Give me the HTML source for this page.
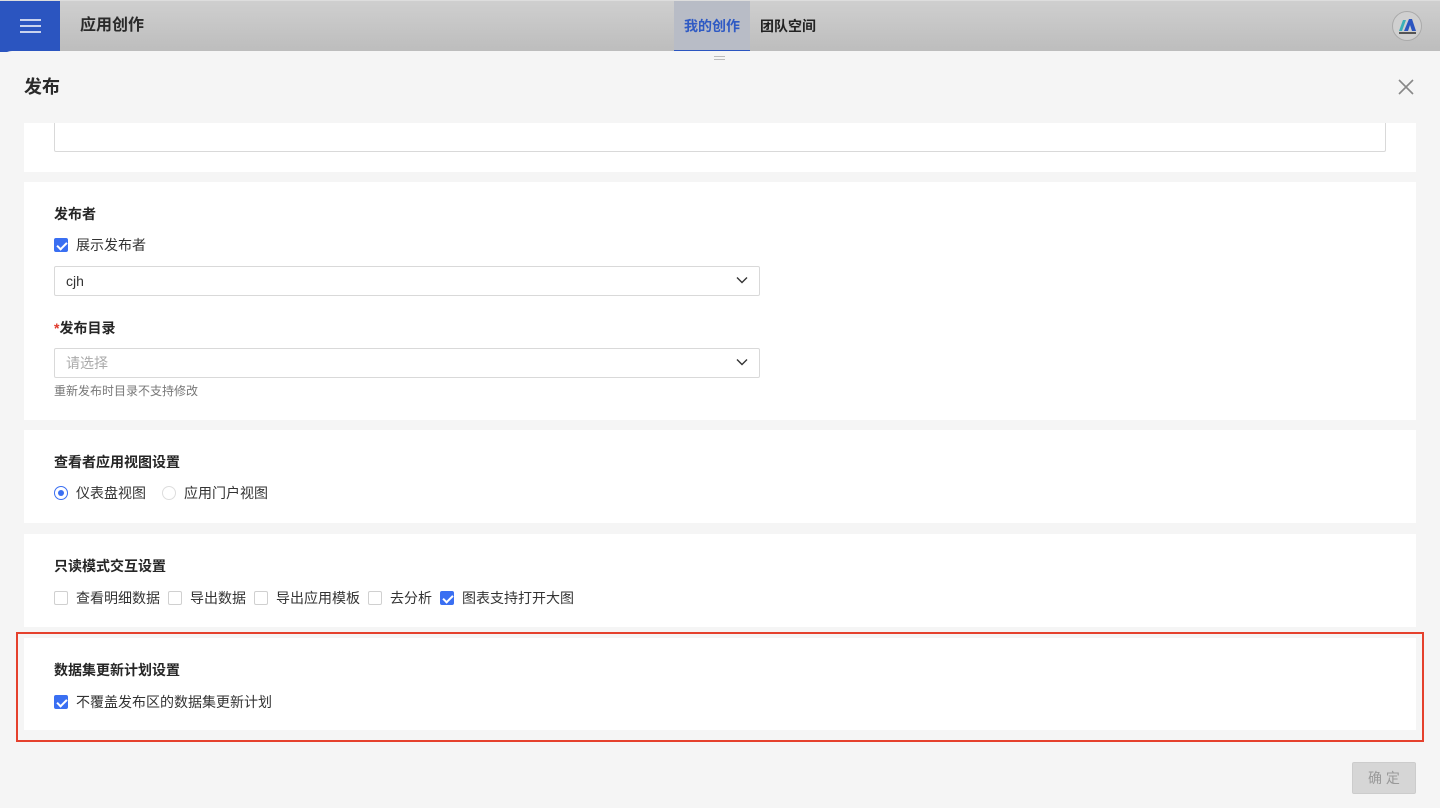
<!DOCTYPE html>
<html><head><meta charset="utf-8"><style>
*{box-sizing:border-box;margin:0;padding:0}
body{width:1440px;height:808px;overflow:hidden;background:#f5f5f5;font-family:"Liberation Sans","Noto Sans CJK SC",sans-serif;color:#333;position:relative}
.top{position:absolute;left:0;top:0;width:1440px;height:51px;background:linear-gradient(#cfcfcf,#bdbdbd);border-top:1px solid #ddd}
.menu{position:absolute;left:0;top:0;width:60px;height:51px;background:#2b55c0}
.menu i{position:absolute;left:20px;width:21px;height:2px;background:#c9d3ee}
.title{position:absolute;left:80px;top:13px;font-size:16px;line-height:24px;color:#2a2a2a;font-weight:600}
.tab{position:absolute;top:0;height:51px;line-height:51px;font-size:14px;font-weight:600;text-align:center}
.modal{position:absolute;left:0;top:51px;width:1440px;height:757px;background:#f5f5f5;border-radius:12px 12px 0 0}
.sec{position:absolute;left:24px;width:1392px;background:#fff}
.h{position:absolute;left:30px;font-size:14px;font-weight:600;color:#262626}
.t{position:absolute;font-size:14px;color:#333}
.cb{position:absolute;width:14px;height:14px;border:1px solid #d0d0d0;border-radius:2px;background:#fff}
.cb.on{background:#3a6ff2;border-color:#3a6ff2}
.cb.on::after{content:"";position:absolute;left:4px;top:1px;width:4px;height:8px;border:solid #fff;border-width:0 2px 2px 0;transform:rotate(45deg)}
.sel{position:absolute;left:30px;width:706px;height:30px;border:1px solid #d9d9d9;border-radius:2px;background:#fff;font-size:14px;line-height:28px;padding-left:11px}
.sel svg{position:absolute;right:11px;top:9px}
</style></head><body>
<div class="top">
<div class="menu"><i style="top:18px"></i><i style="top:24px"></i><i style="top:30px"></i></div>
<div class="title">应用创作</div>
<div class="tab" style="left:674px;width:76px;background:#b8bcc6;color:#2f5ac4;border-bottom:2px solid #2b55c0">我的创作</div>
<div class="tab" style="left:750px;width:76px;color:#222">团队空间</div>
<div style="position:absolute;left:1392px;top:10px;width:30px;height:30px;border-radius:50%;border:1px solid #aaa;background:#d0d0d0">
<svg width="28" height="28" viewBox="0 0 28 28"><polygon points="6,19 10,8 13,8 9,19" fill="#3bb0b8"/><polygon points="11,19 16,7 19,7 23,19 19,19 17,13 15,19" fill="#2b55c0"/><rect x="6" y="20" width="17" height="2" fill="#555"/></svg></div>
</div>
<div class="modal">
<div style="position:absolute;left:714px;top:5px;width:11px;height:1px;background:#bbb"></div>
<div style="position:absolute;left:714px;top:8px;width:11px;height:1px;background:#bbb"></div>
<div style="position:absolute;left:24px;top:23px;font-size:18px;line-height:26px;font-weight:600;color:#2a2a2a">发布</div>
<svg style="position:absolute;left:1397px;top:27px" width="18" height="18" viewBox="0 0 18 18"><path d="M2 2L16 16M16 2L2 16" stroke="#888" stroke-width="1.6"/></svg>

<div class="sec" style="top:72px;height:49px"><div style="position:absolute;left:30px;top:0;width:1332px;height:29px;border:1px solid #d9d9d9;border-top:none;border-radius:0 0 2px 2px"></div></div>

<div class="sec" style="top:131px;height:238px">
<div class="h" style="top:22px">发布者</div>
<div class="cb on" style="left:30px;top:56px"></div><div class="t" style="left:52px;top:53px">展示发布者</div>
<div class="sel" style="top:84px">cjh<svg width="12" height="8" viewBox="0 0 12 8"><path d="M1 1.5L6 6.5L11 1.5" stroke="#333" stroke-width="1.4" fill="none"/></svg></div>
<div class="h" style="top:136px"><span style="color:#e0392b">*</span>发布目录</div>
<div class="sel" style="top:166px;color:#aaa">请选择<svg width="12" height="8" viewBox="0 0 12 8"><path d="M1 1.5L6 6.5L11 1.5" stroke="#333" stroke-width="1.4" fill="none"/></svg></div>
<div style="position:absolute;left:30px;top:200px;font-size:12px;color:#777">重新发布时目录不支持修改</div>
</div>

<div class="sec" style="top:379px;height:93px">
<div class="h" style="top:22px">查看者应用视图设置</div>
<div style="position:absolute;left:30px;top:56px;width:14px;height:14px;border-radius:50%;border:1px solid #3a6ff2"><div style="position:absolute;left:3px;top:3px;width:6px;height:6px;border-radius:50%;background:#3a6ff2"></div></div>
<div class="t" style="left:52px;top:53px">仪表盘视图</div>
<div style="position:absolute;left:138px;top:56px;width:14px;height:14px;border-radius:50%;border:1px solid #ddd"></div>
<div class="t" style="left:160px;top:53px">应用门户视图</div>
</div>

<div class="sec" style="top:483px;height:93px">
<div class="h" style="top:22px">只读模式交互设置</div>
<div class="cb" style="left:30px;top:57px"></div><div class="t" style="left:52px;top:54px">查看明细数据</div>
<div class="cb" style="left:144px;top:57px"></div><div class="t" style="left:166px;top:54px">导出数据</div>
<div class="cb" style="left:230px;top:57px"></div><div class="t" style="left:252px;top:54px">导出应用模板</div>
<div class="cb" style="left:344px;top:57px"></div><div class="t" style="left:366px;top:54px">去分析</div>
<div class="cb on" style="left:416px;top:57px"></div><div class="t" style="left:438px;top:54px">图表支持打开大图</div>
</div>

<div class="sec" style="top:587px;height:92px">
<div class="h" style="top:22px">数据集更新计划设置</div>
<div class="cb on" style="left:30px;top:57px"></div><div class="t" style="left:52px;top:54px">不覆盖发布区的数据集更新计划</div>
</div>
<div style="position:absolute;left:16px;top:581px;width:1408px;height:110px;border:2px solid #e5412d"></div>

<div style="position:absolute;left:1352px;top:711px;width:64px;height:32px;background:#d6d6d6;border:1px solid #ccc;border-radius:2px;color:#999;font-size:14px;text-align:center;line-height:30px">确 定</div>
</div>
</body></html>
